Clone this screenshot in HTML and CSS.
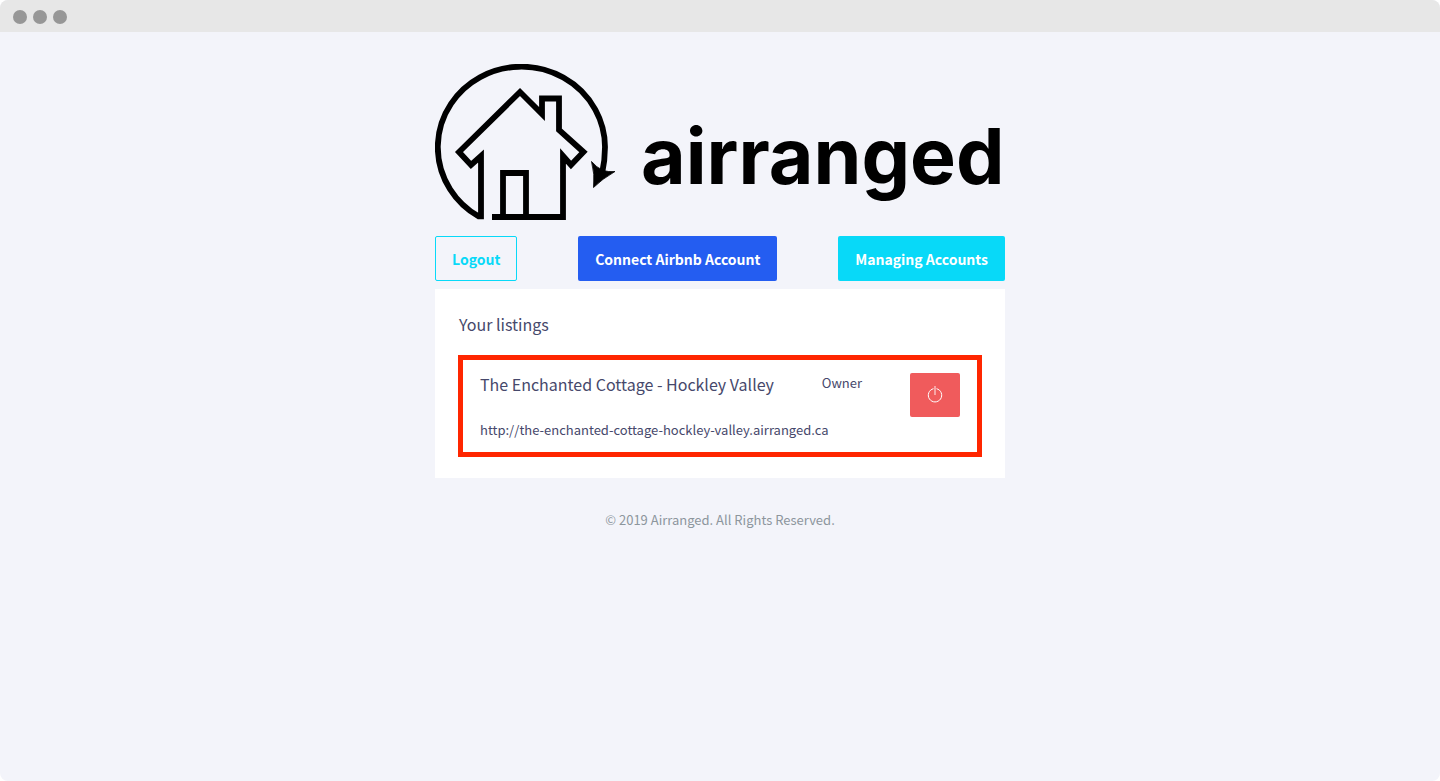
FILE: index.html
```
<!DOCTYPE html>
<html lang="en">

<head>
  <meta charset="UTF-8">
  <meta name="viewport" content="width=device-width, initial-scale=1.0">
  <title>Airranged</title>
  <link rel="stylesheet" href="styles.css">
</head>

<body>
  <div class="window">
    <div class="window-bar">
      <span class="dot"></span>
      <span class="dot"></span>
      <span class="dot"></span>
    </div>

    <div class="container">
      <header class="logo">
        <svg viewBox="0 0 570 156" role="img" aria-label="airranged">
          <!-- circle arrow and house -->
          <g fill="none" stroke="#000" stroke-width="5.8">
            <path d="M167 110C169 101 170 92 170 83A83.600 80.500 0 1 0 43.500 152.300H46V92L36 101L24 88L85 28L107 50V34.500H124V66L148.500 88L136 101L128 92V153H57" />
            <path d="M68 153V109H91V153" />
          </g>
          <path d="M156.500 97.500Q161 103 168 106.500Q173 108 180 107.500Q167 115 158.500 123.500Q160 110 156.500 97.500Z" stroke="#000" stroke-width="0.8" />
          <text class="logo-text" x="206" y="120">airranged</text>
        </svg>
      </header>

      <nav class="actions">
        <button type="button" class="btn btn-outline">Logout</button>
        <button type="button" class="btn btn-primary">Connect Airbnb Account</button>
        <button type="button" class="btn btn-info">Managing Accounts</button>
      </nav>

      <main class="card">
        <h2 class="card-title">Your listings</h2>

        <div class="listing">
          <div class="listing-row">
            <h3 class="listing-name">The Enchanted Cottage - Hockley Valley</h3>
            <span class="listing-role">Owner</span>
            <button type="button" class="btn-power" aria-label="Turn off listing">
              <svg width="16" height="18" viewBox="0 0 16 18" fill="none" stroke="#fff">
                <path d="M6.500 2.700A6.700 6.700 0 1 0 9.500 2.700" />
                <path d="M8 0V9" stroke-width="1.500" opacity="0.6" />
              </svg>
            </button>
          </div>
          <a class="listing-link" href="http://the-enchanted-cottage-hockley-valley.airranged.ca">http://the-enchanted-cottage-hockley-valley.airranged.ca</a>
        </div>
      </main>

      <footer class="footer">&copy; 2019 Airranged. All Rights Reserved.</footer>
    </div>
  </div>
</body>

</html>
```

FILE: styles.css
```
* {
  box-sizing: border-box;
}

body {
  margin: 0;
  background: #fff;
  color: #46486b;
  font-family: "Noto Sans CJK SC", "Open Sans", sans-serif;
  font-size: 13px;
  line-height: 20px;
}

/* Browser frame */
.window {
  min-height: 100vh;
  background: #f3f4fa;
  border-radius: 8px;
  overflow: hidden;
}

.window-bar {
  display: flex;
  align-items: center;
  gap: 6px;
  height: 32px;
  padding: 2px 13px 0;
  background: #e7e7e7;
}

.dot {
  width: 14px;
  height: 14px;
  border-radius: 50%;
  background: #979797;
}

.container {
  max-width: 602px;
  margin: 0 auto;
  padding: 32px 16px;
}

.logo svg {
  display: block;
  width: 100%;
}

.logo-text {
  font-family: Inter, sans-serif;
  font-size: 77px;
  font-weight: 700;
}

/* Buttons */
.actions {
  display: flex;
  justify-content: space-between;
  margin: 16px 0 8px;
}

.btn {
  height: 45px;
  padding: 0 16px;
  border: 1px solid transparent;
  border-radius: 2px;
  color: #fff;
  font-family: inherit;
  font-size: 14px;
  font-weight: 700;
  cursor: pointer;
}

.btn-outline {
  background: transparent;
  border-color: #08d9f8;
  color: #08d9f8;
}

.btn-primary {
  background: #245df1;
}

.btn-info {
  background: #08d9f8;
}

/* Listings */
.card {
  padding: 24px 24px 21px;
  background: #fff;
}

.card-title,
.listing-name {
  margin: 0;
  font-size: 16px;
  font-weight: 400;
  line-height: 22px;
}

.listing {
  margin: 20px -1px 0;
  padding: 13px 17px 12px;
  border: 5px solid #ff2600;
}

.listing-row {
  display: flex;
  align-items: flex-start;
}

.listing-name {
  flex: 1;
}

.listing-role {
  margin-right: 48px;
}

.btn-power {
  display: flex;
  align-items: center;
  justify-content: center;
  width: 50px;
  height: 44px;
  padding: 0;
  border: 0;
  border-radius: 2px;
  background: #f05b5c;
  cursor: pointer;
}

.listing-link {
  display: block;
  margin-top: 3px;
  color: inherit;
  text-decoration: none;
}

.footer {
  margin-top: 32px;
  color: #8d969d;
  text-align: center;
}
```
